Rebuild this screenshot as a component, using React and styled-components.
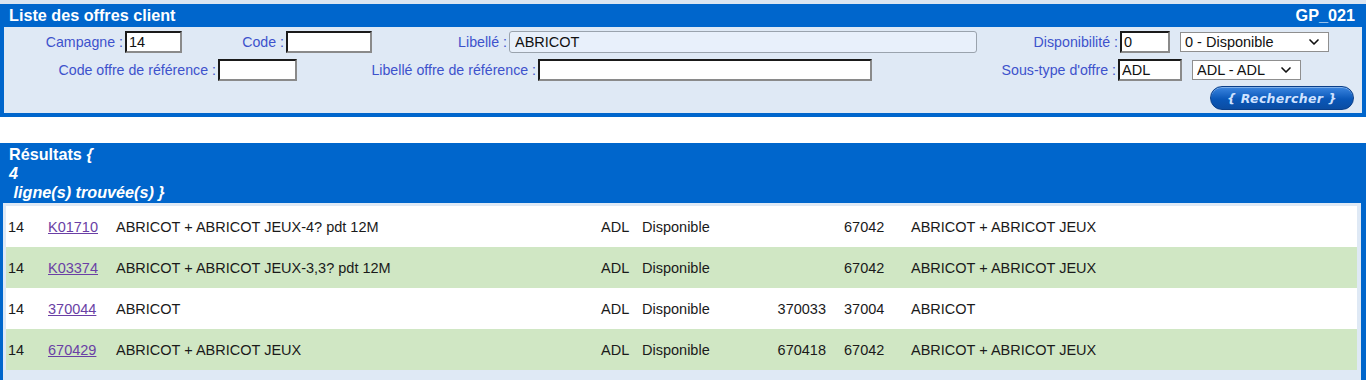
import React from 'react';
import styled, { createGlobalStyle } from 'styled-components';
import { ChevronDown } from 'lucide-react';

const blue = '#0066cc';
const pale = '#dfe9f5';
const labelBlue = '#3d52cc';

const GlobalStyle = createGlobalStyle`
  body {
    margin: 0;
    background: #fff;
    font-family: "Liberation Sans", Arial, sans-serif;
    font-size: 14.5px;
    color: #1a1a1a;
  }
`;

const Page = styled.div`
  width: 1366px;
  border-top: 4px solid #dbe5f1;
`;

const Frame = styled.section`
  border: 4px solid ${blue};
  border-top: none;
  background: ${pale};
`;

const TitleBar = styled.div`
  background: ${blue};
  color: #fff;
  font-weight: bold;
  font-size: 16.2px;
  height: 23px;
  display: flex;
  align-items: center;
  justify-content: space-between;
  margin: 0 -4px;
  padding: 0 11px 0 9px;
`;

const Form = styled.div`
  padding: 4px 0 4px;
  display: flex;
  flex-direction: column;
  gap: 6px;
`;

const FormRow = styled.div`
  display: flex;
  align-items: center;
  height: 22px;
  justify-content: ${({ end }) => (end ? 'flex-end' : 'flex-start')};
  padding-right: ${({ end }) => (end ? '8px' : '0')};
`;

const Label = styled.label`
  width: ${({ w }) => w}px;
  text-align: right;
  color: ${labelBlue};
  font-size: 14.2px;
  padding-right: 2px;
  box-sizing: border-box;
  white-space: nowrap;
`;

const Input = styled.input`
  box-sizing: border-box;
  width: ${({ w }) => w}px;
  height: 22px;
  border-style: solid;
  border-width: 2px;
  border-color: #1a1a1a #8a8a8a #8a8a8a #1a1a1a;
  background: #fff;
  font: 14.5px "Liberation Sans", Arial, sans-serif;
  padding: 0 2px;
  color: #111;
  outline: none;
`;

const ReadOnly = styled(Input)`
  border: 1px solid #9aa3ad;
  border-radius: 3px;
  background: #e8f0fb;
  padding: 0 5px;
`;

const SelectWrap = styled.div`
  position: relative;
  margin-left: 10px;
  width: ${({ w }) => w}px;
  height: 20px;

  svg {
    position: absolute;
    right: 7px;
    top: 2px;
    pointer-events: none;
  }
`;

const Select = styled.select`
  appearance: none;
  width: 100%;
  height: 100%;
  box-sizing: border-box;
  border: 1px solid #8f8f8f;
  background: #fff;
  font: 14.5px "Liberation Sans", Arial, sans-serif;
  color: #111;
  padding: 0 4px;
`;

const SearchButton = styled.button`
  width: 144px;
  height: 24px;
  border-radius: 12px;
  border: 1px solid #0a3f8a;
  background: linear-gradient(#3c86e0, #0a57b8 55%, #0b4da3);
  box-shadow: inset 0 1px 0 rgba(255, 255, 255, 0.35);
  color: #cfe2ff;
  font: italic bold 12.5px "DejaVu Sans", Verdana, sans-serif;
  letter-spacing: 0.3px;
  padding: 0;
`;

const Spacer = styled.div`
  height: 26px;
`;

const ResultsHeader = styled.div`
  background: ${blue};
  color: #fff;
  font-weight: bold;
  font-size: 16.2px;
  line-height: 19px;
  padding: 2px 9px 1px;

  em {
    font-style: italic;
  }
`;

const ResultsBody = styled.div`
  background: ${pale};
  border-left: 3px solid ${blue};
  border-right: 5px solid ${blue};
  padding: 3px 4px 10px 3px;
`;

const Row = styled.div`
  display: grid;
  grid-template-columns: 40px 68px 485px 41px 112px 90px 67px 1fr;
  align-items: center;
  height: 41px;
  background: ${({ alt }) => (alt ? '#d0e7c4' : '#fff')};
`;

const Cell = styled.div`
  padding-left: 2px;
  white-space: nowrap;
  text-align: ${({ right }) => (right ? 'right' : 'left')};
  padding-right: ${({ right }) => (right ? '16px' : '0')};
`;

const CodeLink = styled.a`
  color: #6a3fa5;
  text-decoration: underline;
`;

const rows = [
  { code: 'K01710', label: 'ABRICOT + ABRICOT JEUX-4? pdt 12M', ref: '', num: '67042', refLabel: 'ABRICOT + ABRICOT JEUX' },
  { code: 'K03374', label: 'ABRICOT + ABRICOT JEUX-3,3? pdt 12M', ref: '', num: '67042', refLabel: 'ABRICOT + ABRICOT JEUX' },
  { code: '370044', label: 'ABRICOT', ref: '370033', num: '37004', refLabel: 'ABRICOT' },
  { code: '670429', label: 'ABRICOT + ABRICOT JEUX', ref: '670418', num: '67042', refLabel: 'ABRICOT + ABRICOT JEUX' },
];

const App = () => (
  <Page>
    <GlobalStyle />
    <Frame>
      <TitleBar>
        <span>Liste des offres client</span>
        <span>GP_021</span>
      </TitleBar>
      <Form>
        <FormRow>
          <Label w={121}>Campagne :</Label>
          <Input w={57} defaultValue="14" />
          <Label w={104}>Code :</Label>
          <Input w={86} defaultValue="" />
          <Label w={137}>Libellé :</Label>
          <ReadOnly w={468} defaultValue="ABRICOT" readOnly />
          <Label w={143}>Disponibilité :</Label>
          <Input w={50} defaultValue="0" />
          <SelectWrap w={149}>
            <Select defaultValue="0">
              <option value="0">0 - Disponible</option>
            </Select>
            <ChevronDown size={16} strokeWidth={2.5} color="#111" />
          </SelectWrap>
        </FormRow>
        <FormRow>
          <Label w={214}>Code offre de référence :</Label>
          <Input w={79} defaultValue="" />
          <Label w={241}>Libellé offre de référence :</Label>
          <Input w={334} defaultValue="" />
          <Label w={246}>Sous-type d'offre :</Label>
          <Input w={64} defaultValue="ADL" />
          <SelectWrap w={109}>
            <Select defaultValue="ADL">
              <option value="ADL">ADL - ADL</option>
            </Select>
            <ChevronDown size={16} strokeWidth={2.5} color="#111" />
          </SelectWrap>
        </FormRow>
        <FormRow end>
          <SearchButton>{'{ Rechercher }'}</SearchButton>
        </FormRow>
      </Form>
    </Frame>
    <Spacer />
    <ResultsHeader>
      Résultats <em>{'{'}</em>
      <br />
      <em>4</em>
      <br />
      <em>&nbsp;ligne(s) trouvée(s) {'}'}</em>
    </ResultsHeader>
    <ResultsBody>
      {rows.map((r, i) => (
        <Row key={r.code} alt={i % 2 === 1}>
          <Cell>14</Cell>
          <Cell>
            <CodeLink href="#">{r.code}</CodeLink>
          </Cell>
          <Cell>{r.label}</Cell>
          <Cell>ADL</Cell>
          <Cell>Disponible</Cell>
          <Cell right>{r.ref}</Cell>
          <Cell>{r.num}</Cell>
          <Cell>{r.refLabel}</Cell>
        </Row>
      ))}
    </ResultsBody>
  </Page>
);

export default App;
